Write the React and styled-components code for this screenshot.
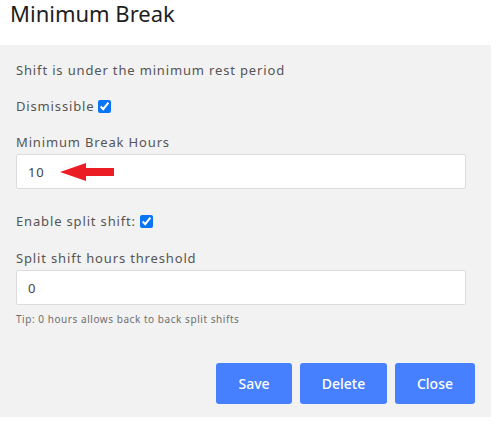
import React from "react"
import styled, { createGlobalStyle } from "styled-components"

const GlobalStyle = createGlobalStyle`
  body {
    margin: 0;
    background: #ffffff;
    font-family: "Noto Sans", "Liberation Sans", sans-serif;
  }
`

export default function App() {
  return (
    <>
      <GlobalStyle />
      <Header>
        <Title>Minimum Break</Title>
      </Header>
      <Panel>
        <Text>Shift is under the minimum rest period</Text>
        <CheckRow $top={18}>
          Dismissible <Check type="checkbox" defaultChecked />
        </CheckRow>
        <Field $top={18}>
          <Label>Minimum Break Hours</Label>
          <InputWrap>
            <Input defaultValue="10" />
            <Arrow width="54" height="20" viewBox="0 0 54 20">
              <polygon points="0,10 26,1 26,6 54,6 54,14 26,14 26,19" fill="#ec1c24" />
            </Arrow>
          </InputWrap>
        </Field>
        <CheckRow $top={23}>
          Enable split shift: <Check type="checkbox" defaultChecked />
        </CheckRow>
        <Field $top={19}>
          <Label>Split shift hours threshold</Label>
          <Input defaultValue="0" />
          <Tip>Tip: 0 hours allows back to back split shifts</Tip>
        </Field>
        <Actions>
          <Button $w={76}>Save</Button>
          <Button $w={87}>Delete</Button>
          <Button $w={80}>Close</Button>
        </Actions>
      </Panel>
    </>
  )
}

const Header = styled.div`
  height: 45px;
  padding: 2px 0 0 10px;
  box-sizing: border-box;
`

const Title = styled.h1`
  margin: 0;
  font-size: 22px;
  font-weight: 400;
  line-height: 22px;
  color: #1e1e1e;
`

const Panel = styled.div`
  width: 491px;
  background: #f2f2f2;
  padding: 16px 16px 13px;
  box-sizing: border-box;
  display: flex;
  flex-direction: column;
`

const Text = styled.div`
  font-size: 13px;
  line-height: 18px;
  letter-spacing: 0.065em;
  color: #555555;
`

const CheckRow = styled(Text)`
  margin-top: ${p => p.$top}px;
  display: flex;
  align-items: center;
  gap: 4px;
`

const Check = styled.input`
  width: 13px;
  height: 13px;
  margin: 0;
  accent-color: #0a74f5;
`

const Field = styled.div`
  margin-top: ${p => p.$top}px;
  margin-right: 9px;
  display: flex;
  flex-direction: column;
`

const Label = styled(Text)`
  margin-bottom: 3px;
`

const InputWrap = styled.div`
  position: relative;
`

const Input = styled.input`
  width: 100%;
  height: 35px;
  box-sizing: border-box;
  border: 1px solid #dcdcdc;
  border-radius: 2px;
  background: #ffffff;
  padding: 0 11px;
  font-family: inherit;
  font-size: 13px;
  letter-spacing: 0.06em;
  color: #444444;
  outline: none;
`

const Arrow = styled.svg`
  position: absolute;
  left: 44px;
  top: 8px;
`

const Tip = styled.div`
  margin-top: 7px;
  font-size: 10px;
  line-height: 14px;
  letter-spacing: 0.055em;
  color: #6f6f6f;
`

const Actions = styled.div`
  margin-top: 37px;
  display: flex;
  justify-content: flex-end;
  gap: 8px;
`

const Button = styled.button`
  width: ${p => p.$w}px;
  height: 41px;
  border: none;
  border-radius: 3px;
  background: #4680ff;
  color: #ffffff;
  font-family: inherit;
  font-size: 14px;
  font-weight: 500;
`
